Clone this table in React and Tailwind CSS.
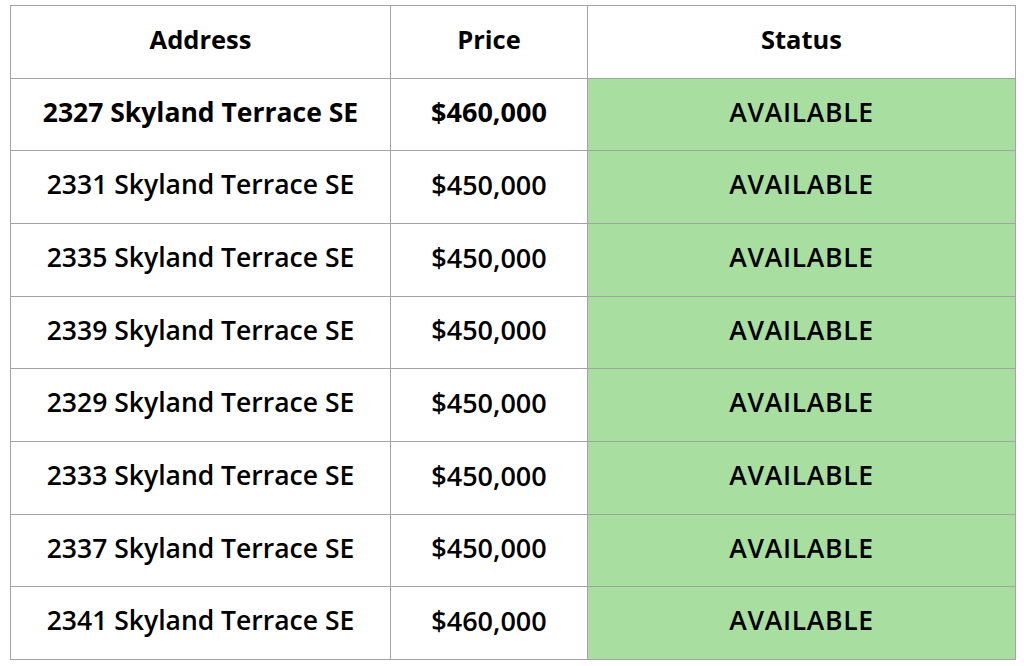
import React from "react";

const rows = [
  ["2327 Skyland Terrace SE", "$460,000"],
  ["2331 Skyland Terrace SE", "$450,000"],
  ["2335 Skyland Terrace SE", "$450,000"],
  ["2339 Skyland Terrace SE", "$450,000"],
  ["2329 Skyland Terrace SE", "$450,000"],
  ["2333 Skyland Terrace SE", "$450,000"],
  ["2337 Skyland Terrace SE", "$450,000"],
  ["2341 Skyland Terrace SE", "$460,000"],
];

const App = () => {
  return (
    <div className="bg-white min-h-[666px] pt-[5px] pl-[10px] font-['Open_Sans',sans-serif] text-black">
      <div className="w-[1006px] h-[655px] bg-[#a3a3a3] p-px grid grid-cols-[379px_196px_427px] grid-rows-9 gap-px">
        <div className="bg-white flex items-center justify-center pb-[5px] text-[25.5px] font-bold">Address</div>
        <div className="bg-white flex items-center justify-center pb-[5px] text-[25.5px] font-bold">Price</div>
        <div className="bg-white flex items-center justify-center pb-[5px] text-[25.5px] font-bold">Status</div>
        {rows.map(([addr, price], i) => (
          <React.Fragment key={addr}>
            <div className={`bg-white flex items-center justify-center pb-[4px] text-[26.5px] ${i === 0 ? "font-bold" : "font-semibold"}`}>
              {addr}
            </div>
            <div className={`bg-white flex items-center justify-center pb-[4px] text-[27px] ${i === 0 ? "font-bold" : "font-semibold"}`}>
              {price}
            </div>
            <div className="bg-[#a8de9f] flex items-center justify-center pb-[4px] text-[26.5px] font-semibold tracking-[0.7px]">
              AVAILABLE
            </div>
          </React.Fragment>
        ))}
      </div>
    </div>
  );
};

export default App;
